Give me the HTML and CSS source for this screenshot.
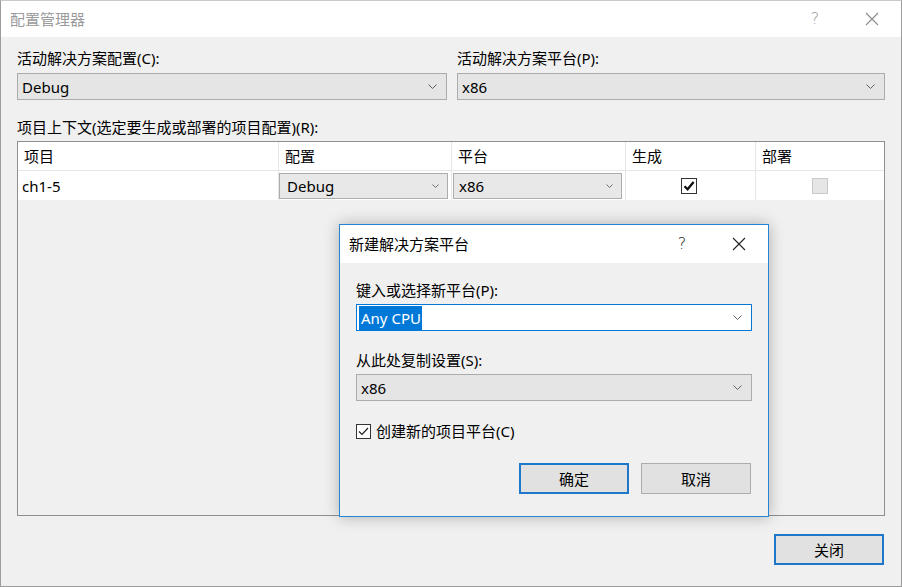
FILE: index.html
```html
<!DOCTYPE html>
<html lang="zh-CN">
<head>
<meta charset="utf-8">
<title>配置管理器</title>
<link rel="stylesheet" href="styles.css">
</head>
<body>
<div class="window">
  <div class="titlebar">
    <span class="title">配置管理器</span>
    <span class="tb-btn help">?</span>
    <span class="tb-btn"><svg width="14" height="14" viewBox="0 0 14 14"><path d="M1 1 L13 13 M13 1 L1 13" stroke="#8a8a8a" stroke-width="1.1" fill="none"/></svg></span>
  </div>
  <div class="content">
    <div class="fields">
      <div class="field">
        <div class="lbl">活动解决方案配置(C):</div>
        <div class="combo"><span class="val">Debug</span><svg class="chev" width="9" height="5" viewBox="0 0 9 5"><path d="M0.5 0.5 L4.5 4.5 L8.5 0.5" stroke="#606060" fill="none"/></svg></div>
      </div>
      <div class="field">
        <div class="lbl">活动解决方案平台(P):</div>
        <div class="combo"><span class="val">x86</span><svg class="chev" width="9" height="5" viewBox="0 0 9 5"><path d="M0.5 0.5 L4.5 4.5 L8.5 0.5" stroke="#606060" fill="none"/></svg></div>
      </div>
    </div>
    <div class="lbl ctx">项目上下文(选定要生成或部署的项目配置)(R):</div>
    <div class="grid">
      <div class="grow head">
        <div class="cell">项目</div>
        <div class="cell">配置</div>
        <div class="cell">平台</div>
        <div class="cell">生成</div>
        <div class="cell last">部署</div>
      </div>
      <div class="grow row">
        <div class="cell name">ch1-5</div>
        <div class="cell sel"><div class="combo small c-conf"><span class="val">Debug</span><svg class="chev" width="7" height="4" viewBox="0 0 7 4"><path d="M0.5 0.5 L3.5 3.5 L6.5 0.5" stroke="#707070" fill="none"/></svg></div></div>
        <div class="cell sel"><div class="combo small c-plat"><span class="val">x86</span><svg class="chev" width="7" height="4" viewBox="0 0 7 4"><path d="M0.5 0.5 L3.5 3.5 L6.5 0.5" stroke="#707070" fill="none"/></svg></div></div>
        <div class="cell center"><span class="chk on"><svg width="14" height="14" viewBox="0 0 14 14"><path d="M2.5 7.2 L5.6 10.3 L11.6 3" stroke="#111" stroke-width="2.3" fill="none"/></svg></span></div>
        <div class="cell center last"><span class="chk off"></span></div>
      </div>
    </div>
    <div class="footer">
      <button class="btn default">关闭</button>
    </div>
  </div>

  <div class="dialog">
    <div class="titlebar dlg-title">
      <span class="title dark">新建解决方案平台</span>
      <span class="tb-btn help dark">?</span>
      <span class="tb-btn"><svg width="14" height="14" viewBox="0 0 14 14"><path d="M1 1 L13 13 M13 1 L1 13" stroke="#222" stroke-width="1.1" fill="none"/></svg></span>
    </div>
    <div class="dlg-body">
      <div class="lbl d1">键入或选择新平台(P):</div>
      <div class="combo edit"><span class="val"><span class="hl">Any CPU</span></span><svg class="chev" width="9" height="5" viewBox="0 0 9 5"><path d="M0.5 0.5 L4.5 4.5 L8.5 0.5" stroke="#606060" fill="none"/></svg></div>
      <div class="lbl d2">从此处复制设置(S):</div>
      <div class="combo"><span class="val">x86</span><svg class="chev" width="9" height="5" viewBox="0 0 9 5"><path d="M0.5 0.5 L4.5 4.5 L8.5 0.5" stroke="#606060" fill="none"/></svg></div>
      <div class="check-row">
        <span class="chk thin"><svg width="13" height="13" viewBox="0 0 13 13"><path d="M2 6.5 L5 9.5 L11 3" stroke="#222" stroke-width="1.2" fill="none"/></svg></span>
        <span class="check-lbl">创建新的项目平台(C)</span>
      </div>
      <div class="dlg-buttons">
        <button class="btn default">确定</button>
        <button class="btn">取消</button>
      </div>
    </div>
  </div>
</div>
</body>
</html>
```

FILE: styles.css
```css
* { box-sizing: border-box; }

html, body {
  margin: 0;
  padding: 0;
  background: #f0f0f0;
}

body {
  font-family: "Noto Sans", "Noto Sans CJK SC", sans-serif;
  font-size: 15px;
  line-height: 20px;
  color: #000;
}

.window {
  position: relative;
  width: 902px;
  height: 587px;
  border: 1px solid #9c9c9c;
  border-top-color: #c9c9c9;
  background: #f0f0f0;
  display: flex;
  flex-direction: column;
}

.titlebar {
  height: 36px;
  background: #fff;
  display: flex;
  align-items: center;
  padding-left: 9px;
  flex: none;
}

.title {
  flex: 1;
  color: #9a9a9a;
  font-size: 15px;
}

.title.dark { color: #000; }

.tb-btn {
  width: 58px;
  height: 100%;
  display: flex;
  align-items: center;
  justify-content: center;
}

.tb-btn.help {
  color: #9a9a9a;
  font-size: 16px;
  font-family: "DejaVu Sans", sans-serif;
  font-weight: 200;
  padding-left: 2px;
}

.tb-btn.help.dark { color: #222; }

.content {
  flex: 1;
  padding: 0 16px;
  display: flex;
  flex-direction: column;
}

.fields {
  display: grid;
  grid-template-columns: 430px 1fr;
  gap: 10px;
  margin-top: 11px;
}

.field {
  display: flex;
  flex-direction: column;
  gap: 5px;
}

.lbl {
  height: 20px;
  white-space: nowrap;
}

.combo {
  height: 27px;
  background: #e5e5e5;
  border: 1px solid #acacac;
  display: flex;
  align-items: center;
  padding-left: 4px;
  padding-right: 9px;
}

.combo .val {
  flex: 1;
  white-space: nowrap;
}

.chev { flex: none; }

.ctx {
  margin-top: 17px;
  margin-bottom: 4px;
}

.grid {
  height: 375px;
  border: 1px solid #8f8f8f;
  background: #f0f0f0;
  display: flex;
  flex-direction: column;
}

.grow {
  display: grid;
  grid-template-columns: 261px 173px 174px 130px 1fr;
  background: #fff;
}

.grow.head {
  height: 29px;
  border-bottom: 1px solid #e6e6e6;
}

.grow.row {
  height: 29px;
}

.cell {
  border-right: 1px solid #e6e6e6;
  display: flex;
  align-items: center;
  padding-left: 6px;
  white-space: nowrap;
}

.cell.last { border-right: none; }

.cell.name { padding-left: 4px; }

.cell.sel {
  padding: 2px 3px 1px 0;
  align-items: stretch;
}

.cell.sel + .cell.sel { padding-left: 1px; }

.combo.small {
  height: auto;
  flex: 1;
  padding-left: 7px;
  padding-right: 8px;
  background: #e8e8e8;
}

.c-plat { padding-left: 5px !important; }

.cell.center {
  justify-content: center;
  padding-left: 0;
}

.chk {
  width: 16px;
  height: 16px;
  display: inline-flex;
  align-items: center;
  justify-content: center;
}

.chk.on {
  border: 1px solid #333;
  background: #fff;
  margin-right: 3px;
}

.chk.off {
  border: 1px solid #c8c8c8;
  background: #e6e6e6;
}

.footer {
  display: flex;
  justify-content: flex-end;
  margin-top: 18px;
  padding-right: 1px;
}

.btn {
  width: 110px;
  height: 31px;
  background: #e1e1e1;
  border: 1px solid #adadad;
  font-family: "Noto Sans", "Noto Sans CJK SC", sans-serif;
  font-size: 15px;
  line-height: 20px;
  color: #000;
  padding: 0;
  margin: 0;
}

.btn.default {
  border: 2px solid #1f77c9;
}

/* Overlay dialog */
.dialog {
  position: absolute;
  left: 338px;
  top: 223px;
  width: 430px;
  height: 293px;
  border: 1px solid #2784d4;
  background: #f0f0f0;
  box-shadow: 0 0 14px rgba(0, 0, 0, 0.28);
  display: flex;
  flex-direction: column;
}

.dlg-title {
  height: 38px;
}

.dlg-body {
  padding: 0 16px;
  display: flex;
  flex-direction: column;
}

.d1 { margin-top: 17px; margin-bottom: 4px; }
.d2 { margin-top: 19px; margin-bottom: 4px; }

.combo.edit {
  background: #fff;
  border-color: #0078d7;
  padding-left: 2px;
}

.hl {
  background: #0078d7;
  color: #fff;
  padding: 2px 1px 2px 2px;
}

.check-row {
  display: flex;
  align-items: center;
  margin-top: 21px;
  height: 18px;
  gap: 5px;
}

.chk.thin {
  width: 15px;
  height: 15px;
  border: 1px solid #333;
  background: #fff;
}

.dlg-buttons {
  display: flex;
  justify-content: flex-end;
  gap: 12px;
  margin-top: 23px;
  padding-right: 1px;
}
```
